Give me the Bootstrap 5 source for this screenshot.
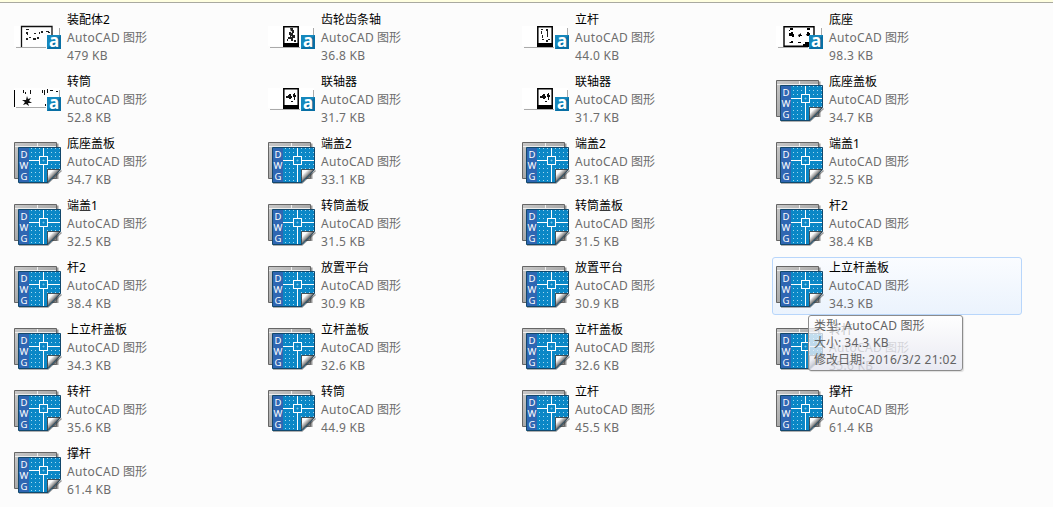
<!DOCTYPE html>
<html lang="zh-CN">
<head>
<meta charset="utf-8">
<title>文件</title>
<link rel="stylesheet" href="https://cdn.jsdelivr.net/npm/bootstrap@5.3.0/dist/css/bootstrap.min.css">
<style>
body{background:#fcfcfc;font-family:"Noto Sans","Noto Sans CJK SC",sans-serif;font-size:12px;line-height:18px;color:#6d6d6d;overflow:hidden;height:507px}
.topline{height:3px;background:#ffffe1;border-bottom:1px solid #a9a9a0}
.files{display:grid;grid-template-columns:repeat(4,250px);grid-auto-rows:58px;gap:4px;padding:6px 0 0 10px}
.file{border:1px solid transparent;border-radius:3px;padding:1px 0 0 3px}
.file.hot{border-color:#b8d6fb;background:linear-gradient(#fafcff,#ebf3fd)}
.file svg.ico{width:50px;height:46px;margin-top:6px;flex:none}
.info{margin-left:3px;white-space:nowrap}
.fname{color:#000}
.lat{letter-spacing:.33px}
.tip{position:absolute;left:808px;top:315px;width:155px;height:56px;border:1px solid #8c8c8c;border-radius:3px;background:linear-gradient(rgba(255,255,255,.78),rgba(228,229,240,.78));box-shadow:1px 1px 1px rgba(0,0,0,.12);padding:1px 0 0 5px;line-height:17px;color:#626262;white-space:nowrap}
</style>
</head>
<body>
<svg width="0" height="0" class="position-absolute">
<defs>
<linearGradient id="gBack" x2="1" y2="1"><stop stop-color="#c9c9c9"/><stop offset="1" stop-color="#8d8d8d"/></linearGradient>
<linearGradient id="gFold" x1="0" y1="0" x2=".52" y2=".52"><stop stop-color="#fff"/><stop offset=".45" stop-color="#fafafa"/><stop offset=".8" stop-color="#999"/><stop offset="1" stop-color="#444"/></linearGradient>
<pattern id="dots" width="4" height="4" x="1" y="3" patternUnits="userSpaceOnUse"><rect width="1" height="1" fill="#a5d8f0"/></pattern>
<symbol id="dwg" viewBox="0 0 50 46">
<path d="M1.5 2.5H44.5V38H1.5z" fill="#555" opacity=".6"/>
<path d="M.5 1.500H42.500V37.500H.5z" fill="url(#gBack)" stroke="#666"/>
<path d="M1 5.500H42M23.500 2V7" stroke="#eee"/>
<path d="M5 42H34L47.500 29.500" fill="none" stroke="#333" stroke-width="1.500" opacity=".5"/>
<path d="M4.500 6.500H46.500V28.500L34 41.500H4.500z" fill="#0b87c6" stroke="#12486c"/>
<path d="M15 7H46V29L33 41H15z" fill="url(#dots)"/>
<path d="M5 7H15V41H5z" fill="#2f66b2"/>
<path d="M15 19.500H46M29.500 7V41" stroke="#fff"/>
<rect x="25.500" y="15.500" width="8" height="8" fill="#0b87c6" stroke="#fff"/>
<path d="M29.500 18.500v2M28.500 19.500h2" stroke="#8ccbea" stroke-width=".8"/>
<path d="M33.500 41.500V28.500H46.500z" fill="url(#gFold)"/><path d="M33.500 41V28.500H46" fill="none" stroke="#333" stroke-width=".8"/>
<g fill="#fff" font-family="Noto Sans" font-size="9.500" text-anchor="middle"><text x="10" y="17.300">D</text><text x="10" y="28">W</text><text x="10" y="38.800">G</text></g>
</symbol>
<symbol id="badge" viewBox="0 0 14 14"><rect width="14" height="14" fill="#1688bd"/><path d="M0 14L14 0V14z" fill="#086fa4"/><text x="7" y="11.700" text-anchor="middle" font-family="Noto Sans" font-weight="700" font-size="17" fill="#fff">a</text></symbol>
</defs>
</svg>
<div class="topline"></div>
<main class="files" id="files"></main>
<div class="tip"><div>类型: <span class="lat">AutoCAD</span> 图形</div><div>大小: <span class="lat">34.3 KB</span></div><div>修改日期: <span class="lat">2016/3/2 21:02</span></div></div>
<script>
const base='<path d="M0 9H46V29H0z" fill="#fff"/><path d="M2 30.500H32M45.500 11V18" stroke="#aaa"/>';
const thumbs={
A:base+'<path d="M7.500 30V9.500H38V18" fill="#fff" stroke="#111" stroke-width="1.300"/><path d="M12 12h3v1h-3zM12 15h2v2h-2zM13 17h1v1h-1zM12 21h2v2h-2zM15 20h2v1h-2zM19 21h3v2h-3zM23 20h2v2h-2zM20 16h2v1h-2zM25 15h1v2h-1zM27 14h2v2h-2zM32 14h3v1h-3zM34 15h2v1h-2z" fill="#222"/>',
B:'<path d="M0 9H46V29H0z" fill="#fff"/><path d="M.5 11V28" stroke="#000"/><path d="M2 28.500H32M45.500 11V18" stroke="#aaa"/><path d="M13 17l1 3 3-1-2 3 3 2-4 0 1 3-3-2-3 1 2-3-3-2h4zM9 11h1v3h-1zM11 13h1v2h-1zM16 11h1v4h-1zM28 11h1v3h-1zM30 11h1v5h-1zM33 10h1v4h-1zM36 11h3v1h-3zM42 12h2v1h-2zM31 25h1v2h-1z" fill="#111"/>'
};
const portrait=d=>base+'<path d="M15.800 9.800H30.200V29H15.800z" fill="#fff" stroke="#000" stroke-width="1.500"/><path d="M15 26H31V30H15z"/>'+d;
thumbs.C=portrait('<path d="M22 11h3v2h1v3h-1v2h2v3h-2v3h-2v-2h-3v-2h2v-2h-1v-3h2zM26 23h2v2h-2zM19 22h1v2h-1z" fill="#222"/><path d="M23 14h1v2h-1zM23 19h1v1h-1z" fill="#ddd"/>');
thumbs.D=portrait('<path d="M19 12h2v1h-2zM19 14h1v3h-1zM20 18h1v3h-1zM24 12h2v8h-1v-6h-1zM20 22h2v1h-2zM26 22h2v1h-2zM24 23h2v2h-2z" fill="#222"/>');
thumbs.E=portrait('<path d="M18 17h2v-1h1v-1h2v2h1v2h-1v1h-2v-1h-3zM26 14h1v7h-1zM25 15h1v3h-1zM27 16h1v2h-1zM23 22h2v1h-2z" fill="#111"/>');
thumbs.F=base+'<path d="M8 9.700H38V29.300H8z" fill="#fff" stroke="#000" stroke-width="1.400"/><path d="M14 11h3v2h-3zM13 13h1v1h-1zM13 16h2v-1h2v2h1v3h-2v-1h-3zM13 25h2v-1h2v2h-3zM22 18l2-1 1-1v2h1v1h-2v1h-1zM22 25h3v1h-3zM31 11h3v2h-3zM30 17h1v-2h2v1h1v3h-3zM27 27h2v-2h4v5h-6z"/>';
const data=[['装配体2','479','A'],['齿轮齿条轴','36.8','C'],['立杆','44.0','D'],['底座','98.3','F'],['转筒','52.8','B'],['联轴器','31.7','E'],['联轴器','31.7','E'],['底座盖板','34.7'],['底座盖板','34.7'],['端盖2','33.1'],['端盖2','33.1'],['端盖1','32.5'],['端盖1','32.5'],['转筒盖板','31.5'],['转筒盖板','31.5'],['杆2','38.4'],['杆2','38.4'],['放置平台','30.9'],['放置平台','30.9'],['上立杆盖板','34.3'],['上立杆盖板','34.3'],['立杆盖板','32.6'],['立杆盖板','32.6'],['转杆','35.6'],['转杆','35.6'],['转筒','44.9'],['立杆','45.5'],['撑杆','61.4'],['撑杆','61.4']];
document.getElementById('files').innerHTML=data.map(([n,s,t],i)=>`<div class="file d-flex${i===19?' hot':''}"><svg class="ico" viewBox="0 0 50 46">${t?thumbs[t]+'<use href="#badge" x="33" y="18" width="14" height="14"/>':'<use href="#dwg" width="50" height="46"/>'}</svg><div class="info"><div class="fname">${n}</div><div><span class="lat">AutoCAD</span> 图形</div><div class="lat">${s} KB</div></div></div>`).join('');
</script>
<script src="https://cdn.jsdelivr.net/npm/bootstrap@5.3.0/dist/js/bootstrap.bundle.min.js"></script>
</body>
</html>
